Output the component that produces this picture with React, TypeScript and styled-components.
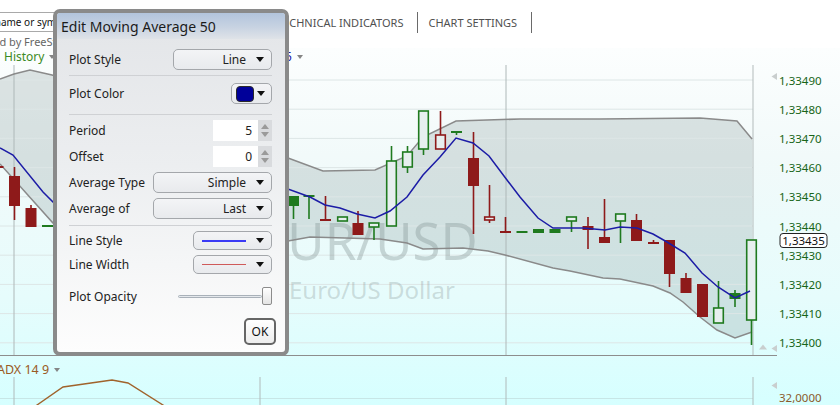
import React from "react";
import styled, { createGlobalStyle } from "styled-components";

const GlobalStyle = createGlobalStyle`
  html, body { margin: 0; padding: 0; background: #ffffff; }
  body { font-family: "Noto Sans", "DejaVu Sans", sans-serif; overflow: hidden; }
  * { box-sizing: border-box; }
`;

const Page = styled.div`
  position: relative;
  width: 840px;
  height: 405px;
  overflow: hidden;
  background: #ffffff;
`;

const TopBar = styled.div`
  display: flex;
  align-items: flex-start;
  height: 35px;
  padding-top: 12px;
`;

const SearchBox = styled.div`
  flex: none;
  width: 130px;
  height: 20px;
  margin-left: -38px;
  padding-left: 4px;
  border: 1px solid #a9a9a9;
  font-size: 10px;
  line-height: 18px;
  color: #111;
  white-space: nowrap;
  overflow: hidden;
`;

const Menu = styled.div`
  display: flex;
  margin-left: 175px;
`;

const MenuItem = styled.div`
  display: flex;
  align-items: center;
  height: 21px;
  padding: 0 14px 0 10px;
  border-right: 1px solid #6a6a6a;
  font-size: 11px;
  color: #505050;
  white-space: nowrap;
`;

const Credit = styled.div`
  height: 13px;
  margin-left: -39px;
  font-size: 11px;
  line-height: 13px;
  color: #666;
  white-space: nowrap;
`;

const ChartArea = styled.div`
  display: flex;
  flex-direction: column;
  height: 357px;
  background: linear-gradient(180deg, #fcfefe 0%, #f2fafa 30%, #e6fcfc 70%, #d6ffff 100%);
`;

const Legend = styled.div`
  display: flex;
  align-items: center;
  height: 17px;
  font-size: 12px;
  white-space: nowrap;
`;

const LegendItem = styled.div<{ $color: string; $ml: number }>`
  display: flex;
  align-items: center;
  margin-left: ${(p) => p.$ml}px;
  color: ${(p) => p.$color};
`;

const Caret = styled.span`
  width: 0;
  height: 0;
  margin-left: 5px;
  margin-top: 1px;
  border-left: 3.5px solid transparent;
  border-right: 3.5px solid transparent;
  border-top: 4px solid #858585;
`;

const PaneSvg = styled.svg`
  display: block;
  flex: none;
`;

const PaneDivider = styled.div`
  width: 777px;
  height: 1px;
  background: #8d8d8d;
`;

const IndicatorPane = styled.div`
  position: relative;
  height: 49px;
`;

const IndicatorLegend = styled.div`
  position: absolute;
  left: -3px;
  top: 5px;
  display: flex;
  align-items: center;
  font-size: 12.5px;
  color: #9a5a24;
  white-space: nowrap;
`;

/* ---------------- Dialog ---------------- */

const Dialog = styled.div`
  position: absolute;
  left: 53px;
  top: 9px;
  width: 236px;
  height: 347px;
  border: 4px solid #8a8a8a;
  border-radius: 7px;
  background: linear-gradient(180deg, #e3e5e8 0%, #eceef0 45%, #fdfdfd 100%);
  display: flex;
  flex-direction: column;
  overflow: hidden;
`;

const DialogHeader = styled.div`
  flex: none;
  height: 26px;
  padding-left: 4px;
  display: flex;
  align-items: center;
  background: linear-gradient(180deg, #b2c4dc 0%, #c8d3e2 55%, #dfe3e8 100%);
  font-size: 14px;
  color: #1b1b1b;
`;

const DialogBody = styled.div`
  flex: 1;
  padding: 10px 13px 0 12px;
  display: flex;
  flex-direction: column;
`;

const Row = styled.div<{ $mt: number; $h: number }>`
  display: flex;
  align-items: center;
  justify-content: space-between;
  height: ${(p) => p.$h}px;
  margin-top: ${(p) => p.$mt}px;
`;

const Label = styled.span`
  font-size: 12px;
  color: #222;
  white-space: nowrap;
`;

const Separator = styled.div<{ $mt: number }>`
  height: 1px;
  margin-top: ${(p) => p.$mt}px;
  background: #cfd1d4;
`;

const Select = styled.div<{ $w: number }>`
  flex: none;
  width: ${(p) => p.$w}px;
  height: 100%;
  border: 1px solid #a4a7ab;
  border-radius: 5px;
  background: linear-gradient(180deg, #f3f4f6 0%, #e8eaed 100%);
  display: flex;
  align-items: center;
  justify-content: flex-end;
  gap: 10px;
  padding-right: 7px;
  font-size: 12px;
  color: #222;
`;

const LineSelect = styled(Select)`
  justify-content: space-between;
  padding-left: 8px;
`;

const Arrow = styled.span`
  flex: none;
  width: 0;
  height: 0;
  border-left: 4px solid transparent;
  border-right: 4px solid transparent;
  border-top: 5px solid #111;
`;

const Swatch = styled.span<{ $color: string }>`
  flex: none;
  width: 18px;
  height: 16px;
  border: 1px solid #2a2a2a;
  border-radius: 4px;
  background: ${(p) => p.$color};
`;

const ColorButton = styled(Select)`
  justify-content: space-between;
  gap: 0;
  padding-left: 4px;
  padding-right: 6px;
`;

const NumberBox = styled.div`
  display: flex;
  height: 100%;
`;

const NumberField = styled.div`
  width: 45px;
  height: 100%;
  background: #ffffff;
  display: flex;
  align-items: center;
  justify-content: flex-end;
  padding-right: 6px;
  font-size: 12px;
  color: #222;
`;

const Spinner = styled.div`
  width: 14px;
  height: 100%;
  background: #d9dbde;
  display: flex;
  flex-direction: column;
  align-items: center;
  justify-content: space-around;
  padding: 2px 0;
`;

const SpinUp = styled.span`
  width: 0;
  height: 0;
  border-left: 4px solid transparent;
  border-right: 4px solid transparent;
  border-bottom: 5px solid #9a9a9a;
`;

const SpinDown = styled.span`
  width: 0;
  height: 0;
  border-left: 4px solid transparent;
  border-right: 4px solid transparent;
  border-top: 5px solid #9a9a9a;
`;

const LineSample = styled.span<{ $color: string; $t: number }>`
  width: 44px;
  height: ${(p) => p.$t}px;
  background: ${(p) => p.$color};
`;

const Slider = styled.div`
  display: flex;
  align-items: center;
  width: 94px;
  height: 100%;
`;

const SliderTrack = styled.div`
  flex: 1;
  height: 3px;
  border: 1px solid #a9b1b9;
  border-radius: 2px;
  background: #e4e8ec;
`;

const SliderThumb = styled.div`
  width: 10px;
  height: 18px;
  border: 1px solid #8c8c8c;
  border-radius: 2px;
  background: linear-gradient(180deg, #ffffff 0%, #e4e4e4 100%);
`;

const OkButton = styled.div`
  align-self: flex-end;
  width: 32px;
  height: 27px;
  margin-top: 13px;
  margin-right: -4px;
  border: 2px solid #666;
  border-radius: 5px;
  background: linear-gradient(180deg, #ffffff 0%, #ededed 100%);
  display: flex;
  align-items: center;
  justify-content: center;
  font-size: 12px;
  color: #111;
`;

/* ---------------- Chart data ---------------- */

type Candle = [number, number, number, number, number, "r" | "g", boolean];

const RED = "#8e1a1a";
const GREEN = "#1f7a1f";

const CANDLES: Candle[] = [
  [-2, 167, 167, 167, 167, "r", true],
  [14.5, 176, 206, 167, 220, "r", true],
  [31, 208, 227, 205, 227, "r", true],
  [47.5, 226, 226, 226, 226, "g", true],
  [293.5, 196, 206, 196, 219, "g", true],
  [309, 196, 196, 196, 219, "g", true],
  [325.5, 220, 220, 196, 220, "r", true],
  [342.5, 217, 221, 217, 221, "g", false],
  [358, 223, 235, 211, 235, "r", true],
  [374, 223, 227, 223, 240, "g", false],
  [391.5, 161, 226, 146, 226, "g", false],
  [407.5, 152, 167, 146, 173, "g", false],
  [423.5, 111, 149, 111, 155, "g", false],
  [440.5, 135, 149, 111, 149, "r", false],
  [456.5, 132, 132, 132, 135, "g", true],
  [473.5, 158, 186, 132, 234, "r", true],
  [489.5, 217, 220, 185, 223, "r", false],
  [505.5, 232, 232, 217, 232, "r", true],
  [522, 232, 232, 232, 232, "g", true],
  [538.5, 229, 233, 229, 233, "g", true],
  [555, 229, 233, 229, 233, "g", true],
  [571.5, 217, 221, 217, 232, "g", false],
  [588, 226, 230, 217, 249, "r", true],
  [604.5, 237, 243, 199, 243, "r", true],
  [620.5, 214, 221, 214, 243, "g", false],
  [636.5, 220, 241, 214, 241, "r", true],
  [653.5, 243, 243, 240, 243, "r", true],
  [669.5, 240, 274, 240, 287, "r", true],
  [686, 278, 293, 273, 293, "r", true],
  [702.5, 284, 317, 284, 317, "r", true],
  [718.5, 308, 323, 281, 323, "g", false],
  [735, 293, 299, 290, 307, "g", true],
  [751.5, 240, 320, 240, 345, "g", false],
];

const UPPER: [number, number][] = [
  [0, 79], [14, 74], [30, 70], [52, 75], [100, 90], [160, 110], [220, 135], [270, 152],
  [288, 158], [323, 171], [375, 170], [407, 156], [423, 137], [456, 121], [520, 119],
  [600, 119], [700, 118], [737, 121], [752, 139],
];

const LOWER: [number, number][] = [
  [0, 164], [53, 223], [100, 238], [180, 246], [250, 244], [288, 241], [310, 237],
  [380, 239], [407, 243], [423, 249], [463, 248], [488, 251], [505, 255], [553, 268],
  [570, 271], [603, 278], [620, 279], [653, 286], [670, 293], [683, 302], [700, 317],
  [717, 330], [735, 338], [752, 332],
];

const MA: [number, number][] = [
  [0, 148], [13, 155], [43, 192], [53, 202], [100, 214], [180, 212], [250, 196], [288, 189],
  [310, 197], [325, 205], [340, 208], [357, 214], [375, 218], [390, 211], [407, 197],
  [423, 175], [440, 157], [456, 138], [473, 143], [489, 156], [507, 180], [520, 197],
  [538, 218], [553, 228], [583, 228], [605, 230], [620, 227], [637, 228], [653, 234],
  [667, 242], [685, 253], [702, 273], [718, 287], [735, 298], [750, 291],
];

const PRICES = [
  "1,33490", "1,33480", "1,33470", "1,33460", "1,33450",
  "1,33440", "1,33430", "1,33420", "1,33410", "1,33400",
];

const gridY = (i: number) => 80 + i * 29.2;
const pts = (a: [number, number][]) => a.map(([x, y]) => `${x},${y}`).join(" ");

function CandleMark({ c }: { c: Candle }) {
  const [cx, top, bottom, wt, wb, col, filled] = c;
  const color = col === "r" ? RED : GREEN;
  return (
    <g>
      {wb > wt && <line x1={cx} x2={cx} y1={wt} y2={wb} stroke={color} strokeWidth={1.6} />}
      {bottom === top ? (
        <line x1={cx - 5.5} x2={cx + 5.5} y1={top} y2={top} stroke={color} strokeWidth={2} />
      ) : filled ? (
        <rect x={cx - 5.5} y={top} width={11} height={bottom - top} fill={color} />
      ) : (
        <rect
          x={cx - 4.8}
          y={top}
          width={9.6}
          height={bottom - top}
          fill="#e7efef"
          stroke={color}
          strokeWidth={1.6}
        />
      )}
    </g>
  );
}

function PriceChart() {
  return (
    <PaneSvg width={840} height={290} viewBox="0 65 840 290">
      <polygon points={pts([...UPPER, ...[...LOWER].reverse()])} fill="#8a9a9a" fillOpacity={0.27} />
      {PRICES.map((_, i) => (
        <line key={i} x1={0} x2={753} y1={gridY(i)} y2={gridY(i)} stroke="#dde6e6" strokeWidth={1} />
      ))}
      {[14, 260, 506].map((x) => (
        <line key={x} x1={x} x2={x} y1={65} y2={355} stroke="#aeb8b8" strokeWidth={1} />
      ))}
      <line x1={753} x2={753} y1={65} y2={355} stroke="#b3bbbb" strokeWidth={1} />
      <text x={259} y={260} fontSize={51} fill="#7f9090" fillOpacity={0.36} fontFamily="Noto Sans, sans-serif">
        EUR/USD
      </text>
      <text x={289} y={299} fontSize={24} fill="#7f9090" fillOpacity={0.3} fontFamily="Noto Sans, sans-serif">
        Euro/US Dollar
      </text>
      <polyline points={pts(UPPER)} fill="none" stroke="#8a8a8a" strokeWidth={1.5} />
      <polyline points={pts(LOWER)} fill="none" stroke="#8a8a8a" strokeWidth={1.5} />
      {CANDLES.map((c, i) => (
        <CandleMark key={i} c={c} />
      ))}
      <polyline points={pts(MA)} fill="none" stroke="#1c1ca6" strokeWidth={1.5} />
      {PRICES.map((p, i) => (
        <text
          key={p}
          x={779}
          y={gridY(i)}
          fontSize={11.5}
          fill="#176517"
          dominantBaseline="central"
          fontFamily="Noto Sans, sans-serif"
        >
          {p}
        </text>
      ))}
      <rect x={780} y={233.5} width={47} height={14} rx={3} fill="#ffffff" stroke="#222" strokeWidth={1} />
      <text
        x={803.5}
        y={240.8}
        fontSize={11.5}
        fill="#111"
        textAnchor="middle"
        dominantBaseline="central"
        fontFamily="Noto Sans, sans-serif"
      >
        1,33435
      </text>
      <polygon points="777,73 771.5,76.5 777,80" fill="#c9cece" />
      <polygon points="759,349.5 763,344.5 767,349.5" fill="#c9cece" />
      <polygon points="777,345 771.5,348.5 777,352" fill="#c9cece" />
    </PaneSvg>
  );
}

function IndicatorChart() {
  return (
    <PaneSvg width={840} height={49} viewBox="0 356 840 49">
      <line x1={0} x2={753} y1={398.5} y2={398.5} stroke="#c7e6e6" strokeWidth={1} />
      {[14, 260, 506, 753].map((x) => (
        <line key={x} x1={x} x2={x} y1={377} y2={405} stroke="#b0baba" strokeWidth={1} />
      ))}
      <polyline
        points="0,432 37,405 63,387 112,380 128,383 163,405 190,425"
        fill="none"
        stroke="#a0632c"
        strokeWidth={1.4}
      />
      <polygon points="777,382 771.5,385.5 777,389" fill="#c9cece" />
      <text
        x={779}
        y={397.5}
        fontSize={11.5}
        fill="#8b5a2b"
        dominantBaseline="central"
        fontFamily="Noto Sans, sans-serif"
      >
        32,0000
      </text>
    </PaneSvg>
  );
}

function MovingAverageDialog() {
  return (
    <Dialog>
      <DialogHeader>Edit Moving Average 50</DialogHeader>
      <DialogBody>
        <Row $mt={0} $h={21}>
          <Label>Plot Style</Label>
          <Select $w={99}>
            Line
            <Arrow />
          </Select>
        </Row>
        <Separator $mt={5} />
        <Row $mt={7} $h={21}>
          <Label>Plot Color</Label>
          <ColorButton $w={41}>
            <Swatch $color="#000099" />
            <Arrow />
          </ColorButton>
        </Row>
        <Separator $mt={10} />
        <Row $mt={5} $h={21}>
          <Label>Period</Label>
          <NumberBox>
            <NumberField>5</NumberField>
            <Spinner>
              <SpinUp />
              <SpinDown />
            </Spinner>
          </NumberBox>
        </Row>
        <Row $mt={5} $h={21}>
          <Label>Offset</Label>
          <NumberBox>
            <NumberField>0</NumberField>
            <Spinner>
              <SpinUp />
              <SpinDown />
            </Spinner>
          </NumberBox>
        </Row>
        <Row $mt={5} $h={21}>
          <Label>Average Type</Label>
          <Select $w={119}>
            Simple
            <Arrow />
          </Select>
        </Row>
        <Row $mt={5} $h={21}>
          <Label>Average of</Label>
          <Select $w={119}>
            Last
            <Arrow />
          </Select>
        </Row>
        <Separator $mt={6} />
        <Row $mt={5} $h={19}>
          <Label>Line Style</Label>
          <LineSelect $w={79}>
            <LineSample $color="#3a3af5" $t={2} />
            <Arrow />
          </LineSelect>
        </Row>
        <Row $mt={5} $h={19}>
          <Label>Line Width</Label>
          <LineSelect $w={79}>
            <LineSample $color="#cf5a5a" $t={1.5} />
            <Arrow />
          </LineSelect>
        </Row>
        <Row $mt={13} $h={18}>
          <Label>Plot Opacity</Label>
          <Slider>
            <SliderTrack />
            <SliderThumb />
          </Slider>
        </Row>
        <OkButton>OK</OkButton>
      </DialogBody>
    </Dialog>
  );
}

export default function App() {
  return (
    <>
      <GlobalStyle />
      <Page>
        <TopBar>
          <SearchBox>Enter name or symbol</SearchBox>
          <Menu>
            <MenuItem>TECHNICAL INDICATORS</MenuItem>
            <MenuItem>CHART SETTINGS</MenuItem>
          </Menu>
        </TopBar>
        <Credit>Powered by FreeStockCharts.com</Credit>
        <ChartArea>
          <Legend>
            <LegendItem $color="#3b8a24" $ml={4}>
              History
              <Caret />
            </LegendItem>
            <LegendItem $color="#1a1aa8" $ml={208}>
              MA 5
              <Caret />
            </LegendItem>
          </Legend>
          <PriceChart />
          <PaneDivider />
          <IndicatorPane>
            <IndicatorChart />
            <IndicatorLegend>
              ADX 14 9
              <Caret />
            </IndicatorLegend>
          </IndicatorPane>
        </ChartArea>
        <MovingAverageDialog />
      </Page>
    </>
  );
}
